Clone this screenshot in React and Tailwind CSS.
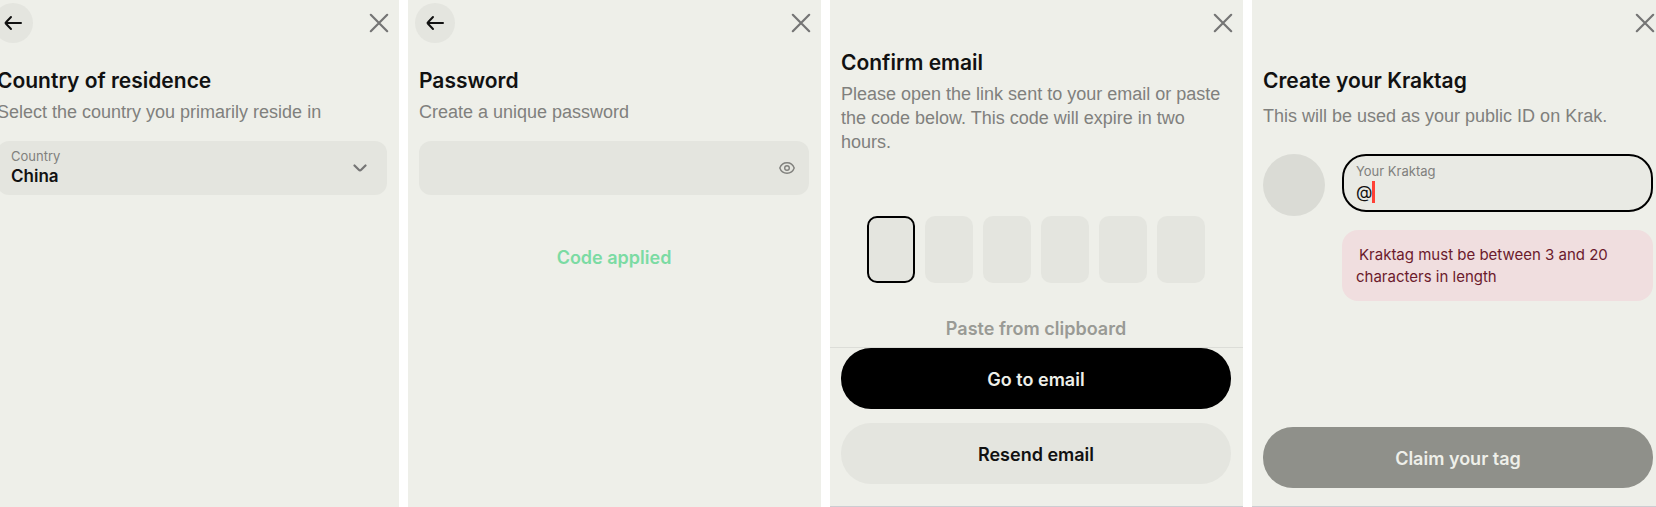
import { useState } from "react";

//rounded arrow used in the back button
function ArrowLeft() {
    return (
        <svg width="18" height="16" viewBox="0 0 18 16" fill="none" stroke="currentColor" strokeWidth="2" strokeLinecap="round" strokeLinejoin="round" aria-hidden="true">
            <path d="M17 8H1.5M7 2L2 7.300Q1.300 8 2 8.700L7 14" />
        </svg>
    )
}

function CloseIcon() {
    return (
        <svg width="20" height="20" viewBox="0 0 20 20" fill="none" stroke="currentColor" strokeWidth="2.200" strokeLinecap="round" aria-hidden="true">
            <path d="M1.800 1.800L18.200 18.200M18.200 1.800L1.800 18.200" />
        </svg>
    )
}

function ChevronDown() {
    return (
        <svg width="14" height="9" viewBox="0 0 14 9" fill="none" stroke="currentColor" strokeWidth="2.200" strokeLinecap="round" strokeLinejoin="round" aria-hidden="true">
            <path d="M1.500 1.500L5.800 5.700Q7 6.900 8.200 5.700L12.500 1.500" />
        </svg>
    )
}

function EyeIcon() {
    return (
        <svg width="16" height="12" viewBox="0 0 16 12" fill="none" stroke="currentColor" strokeWidth="1.4" aria-hidden="true">
            <path d="M0.800 6C2 2.600 4.800 0.800 8 0.800S14 2.600 15.200 6C14 9.400 11.200 11.200 8 11.200S2 9.400 0.800 6Z" />
            <circle cx="8" cy="6" r="2.300" />
        </svg>
    )
}

function TopBar({ back }) {
    return (
        <div className="flex h-[46px] items-center pt-[3px] pb-1 pl-[7px] pr-[10px]">
            {back && (
                <button type="button" aria-label="Back" className="flex size-10 items-center justify-center rounded-full bg-[#e4e5df] text-[#111]">
                    <ArrowLeft />
                </button>
            )}
            <button type="button" aria-label="Close" className="ml-auto text-[#757575]">
                <CloseIcon />
            </button>
        </div>
    )
}

function Panel({ back, children }) {
    return (
        <section className="flex min-w-0 flex-1 flex-col bg-[#eeefe9]">
            <TopBar back={back} />
            <div className="flex flex-1 flex-col pl-[11px] pr-3">{children}</div>
        </section>
    )
}

const titleStyle = "text-[21px] leading-7 font-semibold text-[#111]"
const textStyle = "font-['Liberation_Sans',Arial,sans-serif] text-[18px] leading-6 text-[#80807d]"
const pillStyle = "h-[61px] w-full rounded-[30px] pt-px text-[18px] font-semibold"

export default function App() {

    const [password, setPassword] = useState("")
    const [showPassword, setShowPassword] = useState(false) //toggle for the eye button
    const [tag, setTag] = useState("@")

    return (
        <main className="overflow-x-hidden bg-white font-['Inter','Liberation_Sans',sans-serif]">
            {/* the row runs past both edges of the window */}
            <div className="-ml-[14px] -mr-[9px] flex min-h-screen gap-[9px]">

                {/* country */}
                <Panel back>
                    <h1 className={`${titleStyle} mt-[21px]`}>Country of residence</h1>
                    <p className={`${textStyle} mt-[5px]`}>Select the country you primarily reside in</p>
                    <div className="mt-[17px] grid h-[54px] items-center rounded-xl bg-[#e4e5df]">
                        <div className="col-start-1 row-start-1 flex flex-col px-[14px] pb-1">
                            <label htmlFor="country" className="text-[13px] leading-5 text-[#80807d]">Country</label>
                            <select id="country" className="appearance-none bg-transparent text-[17px] leading-5 font-semibold text-[#111]">
                                <option>China</option>
                            </select>
                        </div>
                        <span className="pointer-events-none col-start-1 row-start-1 mr-5 justify-self-end text-[#757575]">
                            <ChevronDown />
                        </span>
                    </div>
                </Panel>

                {/* password */}
                <Panel back>
                    <h1 className={`${titleStyle} mt-[21px]`}>Password</h1>
                    <p className={`${textStyle} mt-[5px]`}>Create a unique password</p>
                    <div className="mt-[17px] flex h-[54px] items-center rounded-xl bg-[#e4e5df] px-[14px]">
                        <input
                         aria-label="Password"
                         type={showPassword ? "text" : "password"}
                         value={password}
                         onChange={(e) => setPassword(e.target.value)}
                         className="min-w-0 flex-1 bg-transparent text-[17px] outline-none"
                        />
                        <button type="button" aria-label="Show password" onClick={() => setShowPassword(!showPassword)} className="text-[#80807d]">
                            <EyeIcon />
                        </button>
                    </div>
                    <p className="mt-[49px] text-center text-[18px] leading-7 font-semibold text-[#7bdba3]">Code applied</p>
                </Panel>

                {/* email code */}
                <Panel>
                    <h1 className={`${titleStyle} mt-[3px]`}>Confirm email</h1>
                    <p className={`${textStyle} mt-[5px]`}>
                        Please open the link sent to your email or paste the code below. This code will expire in two hours.
                    </p>
                    <div className="mt-[62px] flex justify-center gap-2.5">
                        {[1, 2, 3, 4, 5, 6].map((n) => (
                            <input
                             key={n}
                             aria-label={`Digit ${n}`}
                             maxLength={1}
                             inputMode="numeric"
                             className={`h-[67px] w-12 rounded-[10px] bg-[#e4e5df] text-center text-[22px] outline-none
                             ${n === 1 ? "border-2 border-black" : ""}`}
                            />
                        ))}
                    </div>
                    <button type="button" className="mt-8 self-center text-[18px] leading-7 font-semibold text-[#999a95]">Paste from clipboard</button>
                    <div className="-ml-[11px] -mr-3 mt-auto flex flex-col gap-[14px] border-t border-b border-t-[#dcddd8] border-b-[#cdcdd2] pb-[22px] pl-[11px] pr-3">
                        <button type="button" className={`${pillStyle} bg-black text-[#eeefe9]`}>Go to email</button>
                        <button type="button" className={`${pillStyle} bg-[#e4e5df] text-[#111]`}>Resend email</button>
                    </div>
                </Panel>

                {/* kraktag */}
                <Panel>
                    <h1 className={`${titleStyle} mt-[21px]`}>Create your Kraktag</h1>
                    <p className={`${textStyle} mt-[9px]`}>This will be used as your public ID on Krak.</p>
                    <div className="mt-[26px] flex gap-[17px]">
                        <div className="size-[62px] shrink-0 rounded-full bg-[#dadbd5]"></div>
                        <div className="flex min-w-0 flex-1 flex-col gap-[18px]">
                            <div className="flex h-[58px] flex-col rounded-3xl border-2 border-black bg-[#e9eae4] px-3 pt-[5px]">
                                <label htmlFor="kraktag" className="text-[13px] leading-5 text-[#80807d]">Your Kraktag</label>
                                <div className="flex items-center">
                                    <input
                                     id="kraktag"
                                     value={tag}
                                     onChange={(e) => setTag(e.target.value)}
                                     className="field-sizing-content bg-transparent text-[17px] leading-5 text-[#111] caret-[#ff4136] outline-none"
                                    />
                                    <span className="h-[22px] w-[3px] bg-[#ff4136]"></span>
                                </div>
                            </div>
                            <p className="rounded-2xl bg-[#f0dedf] px-[14px] pt-[14px] pb-[13px] indent-[3px] text-[15px] leading-[22px] text-[#6b1a2c]">
                                Kraktag must be between 3 and 20 characters in length
                            </p>
                        </div>
                    </div>
                    <div className="-ml-[11px] -mr-3 mt-auto border-b border-b-[#cdcdd2] pb-[18px] pl-[11px] pr-3">
                        <button type="button" className={`${pillStyle} bg-[#8f908a] text-[#eeefe9]`}>Claim your tag</button>
                    </div>
                </Panel>
            </div>
        </main>
    )
}
